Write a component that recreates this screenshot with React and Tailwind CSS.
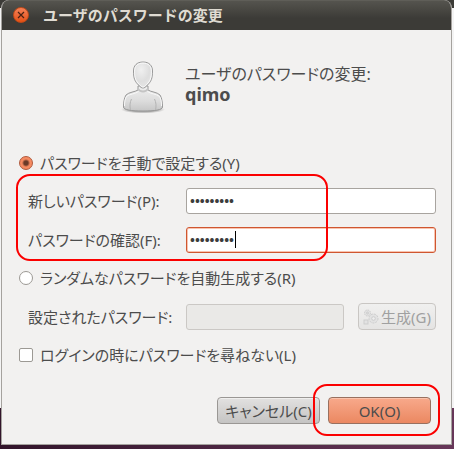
import React, { useState } from 'react';

const Avatar = () => (
  <svg viewBox="0 0 44 56" className="w-11 h-14 shrink-0" aria-hidden="true">
    <defs>
      <radialGradient id="head" cx="0.4" cy="0.3" r="0.8">
        <stop offset="0" stopColor="#f0f0f0" />
        <stop offset="0.55" stopColor="#dedede" />
        <stop offset="1" stopColor="#e8e8e8" />
      </radialGradient>
      <linearGradient id="body" x1="0" y1="0" x2="0" y2="1">
        <stop offset="0" stopColor="#efefef" />
        <stop offset="0.6" stopColor="#dcdcdc" />
        <stop offset="1" stopColor="#c6c6c6" />
      </linearGradient>
      <radialGradient id="shadow">
        <stop offset="0.6" stopColor="#000" stopOpacity="0.3" />
        <stop offset="1" stopColor="#000" stopOpacity="0" />
      </radialGradient>
    </defs>
    <ellipse cx="22" cy="50.500" rx="22" ry="4" fill="url(#shadow)" />
    <path
      d="M17 27v4c-3 2-9 2-12 5-2 3-2.500 8-2.500 12 0 3 8 4 19.500 4s19.500-1 19.500-4c0-4-.5-9-2.500-12-3-3-9-3-12-5v-4z"
      fill="url(#body)"
      stroke="#989898"
    />
    <path d="M3.500 47c0-4 .5-8 2.500-10 3-2 8-2 11.500-4.500M40.500 47c0-4-.5-8-2.500-10-3-2-8-2-11.500-4.500" fill="none" stroke="#f8f8f8" />
    <path d="M9.500 51c-1-4-.5-8 1-11M34.500 51c1-4 .5-8-1-11" fill="none" stroke="#b4b4b4" />
    <path d="M16.500 29.500c3 4 8 4 11 0" fill="none" stroke="#c4c4c4" strokeWidth="2" />
    <path
      d="M22 3c-6 0-9.500 3.500-9.500 9 0 8 1.500 10.500 5 14 1.800 2 3 3 4.500 3s2.700-1 4.500-3c3.500-3.500 5-6 5-14 0-5.500-3.500-9-9.500-9z"
      fill="url(#head)"
      stroke="#9a9a9a"
    />
    <path
      d="M22 4.100c-5.300 0-8.400 3-8.400 8 0 7.600 1.500 10 4.700 13.200 1.700 1.800 2.600 2.700 3.700 2.700s2-.9 3.700-2.700c3.200-3.200 4.700-5.600 4.700-13.200 0-5-3.100-8-8.400-8z"
      fill="none"
      stroke="#fafafa"
    />
  </svg>
);

const GenerateIcon = () => (
  <svg viewBox="0 0 16 16" className="w-4 h-4 shrink-0" fill="#e2e2e2" stroke="#cdcdcd" aria-hidden="true">
    <circle cx="4.500" cy="4" r="3" strokeDasharray="1.500 0.800" />
    <circle cx="4.500" cy="4" r="1" />
    <rect x="1" y="11" width="4" height="4" />
    <circle cx="10.500" cy="9.500" r="4.500" strokeDasharray="2 1" />
    <circle cx="10.500" cy="9.500" r="1.800" fill="#eeeeee" />
  </svg>
);

const fieldClass =
  'w-full min-w-0 h-[26px] px-[3px] rounded-[3px] border bg-white text-[13px] font-bold text-[#3c3c3c] outline-none';

const radioClass =
  'appearance-none w-3.5 h-3.5 shrink-0 rounded-full border border-[#9c9994] bg-white checked:border-[#b0583a] checked:bg-[radial-gradient(circle,#6b3a28_0_2px,#f58a61_4px)]';

const App = () => {
  const [mode, setMode] = useState('manual');
  const [password, setPassword] = useState('qimoqimo1');
  const [confirmation, setConfirmation] = useState('qimoqimo1');
  const [noPrompt, setNoPrompt] = useState(false);

  return (
    <div className="min-h-screen px-px bg-[linear-gradient(#3c3b37_8px,#f4f4f4_8px,#f4f4f4_408px,transparent_408px),linear-gradient(90deg,#32152b,#673759)] font-['Noto_Sans','Noto_Sans_CJK_JP',sans-serif] [font-feature-settings:'palt'] text-[15px] leading-5 text-[#4c4c4c]">
      <main className="mr-px rounded-t-lg border border-t-0 border-[#a5a29e] bg-[#f2f1f0] overflow-hidden">
        <header className="-mx-px h-[30px] px-3 pb-px flex items-center gap-3.5 border-t border-[#5f5e58] bg-linear-to-b from-[#55544e] to-[#3c3b37] to-60%">
          <button
            type="button"
            aria-label="閉じる"
            className="w-4 h-4 rounded-full border border-[#c04a1a] bg-linear-to-b from-[#f58055] to-[#e4500f] flex items-center justify-center"
          >
            <svg viewBox="0 0 8 8" className="w-2 h-2" stroke="#4a2113" strokeWidth="1.200">
              <path d="M1 1l6 6M7 1L1 7" />
            </svg>
          </button>
          <h1 className="font-bold text-[#dfdbd2] [font-feature-settings:normal]">ユーザのパスワードの変更</h1>
        </header>

        <div className="pt-[29px] pl-[119px] flex gap-5">
          <Avatar />
          <div className="pt-[5px]">
            <p className="text-[16px]">ユーザのパスワードの変更:</p>
            <p className="text-[18px] font-bold">qimo</p>
          </div>
        </div>

        <form className="pl-4 pr-[15px] pt-[38px] pb-5" onSubmit={(e) => e.preventDefault()}>
          <label className="flex items-center gap-[7px] pl-px">
            <input type="radio" name="mode" className={radioClass} checked={mode === 'manual'} onChange={() => setMode('manual')} />
            パスワードを手動で設定する(Y)
          </label>

          <div className="relative py-[15px] pl-2.5 grid grid-cols-[158px_1fr] items-center gap-y-[13px]">
            <label htmlFor="password">新しいパスワード(P):</label>
            <input
              id="password"
              type="password"
              className={`${fieldClass} border-[#a8a49f]`}
              value={password}
              onChange={(e) => setPassword(e.target.value)}
            />
            <label htmlFor="confirmation">パスワードの確認(F):</label>
            <div className="relative">
              <input
                id="confirmation"
                type="password"
                className={`${fieldClass} block border-[#cf5630] ring-1 ring-inset ring-[#f8c4b0]`}
                value={confirmation}
                onChange={(e) => setConfirmation(e.target.value)}
              />
              <span className="absolute left-[49px] top-1 w-px h-[17px] bg-black" />
            </div>
            {/* highlight around the two entries */}
            <div className="absolute -left-0.5 top-px w-[312px] h-[87px] rounded-[14px] border-2 border-[#fb0000] pointer-events-none" />
          </div>

          <label className="flex items-center gap-[7px] pl-px">
            <input type="radio" name="mode" className={radioClass} checked={mode === 'random'} onChange={() => setMode('random')} />
            ランダムなパスワードを自動生成する(R)
          </label>

          <div className="py-[15px] pl-2.5 grid grid-cols-[158px_1fr_auto] items-center">
            <label htmlFor="generated">設定されたパスワード:</label>
            <input
              id="generated"
              type="text"
              disabled
              className="w-full min-w-0 h-[26px] px-1 rounded-[3px] border border-[#cbc8c5] bg-[#eae9e7]"
            />
            <button
              type="button"
              disabled
              className="ml-3.5 w-[78px] h-[27px] flex items-center justify-center gap-0.5 rounded border border-[#c9c6c3] bg-linear-to-b from-[#f0f0ef] to-[#e5e4e3] text-[#a0a0a0] whitespace-nowrap"
            >
              <GenerateIcon />
              生成(G)
            </button>
          </div>

          <label className="flex items-center gap-[7px] pl-px">
            <input
              type="checkbox"
              className="appearance-none w-3.5 h-3.5 shrink-0 rounded-[2px] border border-[#9c9994] bg-white checked:bg-[#f58a61]"
              checked={noPrompt}
              onChange={(e) => setNoPrompt(e.target.checked)}
            />
            ログインの時にパスワードを尋ねない(L)
          </label>

          <div className="pt-8 pr-[5px] flex justify-end gap-2">
            <button
              type="button"
              className="w-[103px] h-[27px] rounded border border-[#9a9794] bg-linear-to-b from-[#e2e1e0] to-[#c5c4c3] shadow-[inset_0_1px_0_#f0efee] whitespace-nowrap"
            >
              キャンセル(C)
            </button>
            <div className="relative">
              <button
                type="submit"
                className="block w-[103px] h-[27px] rounded border border-[#98705f] bg-linear-to-b from-[#f8a98b] to-[#eb8861] shadow-[inset_0_1px_0_#fbc2ac]"
              >
                OK(O)
              </button>
              <div className="absolute -left-[15px] -top-[13px] w-[127px] h-[52px] rounded-[14px] border-2 border-[#fb0000] pointer-events-none" />
            </div>
          </div>
        </form>
      </main>
    </div>
  );
};

export default App;
